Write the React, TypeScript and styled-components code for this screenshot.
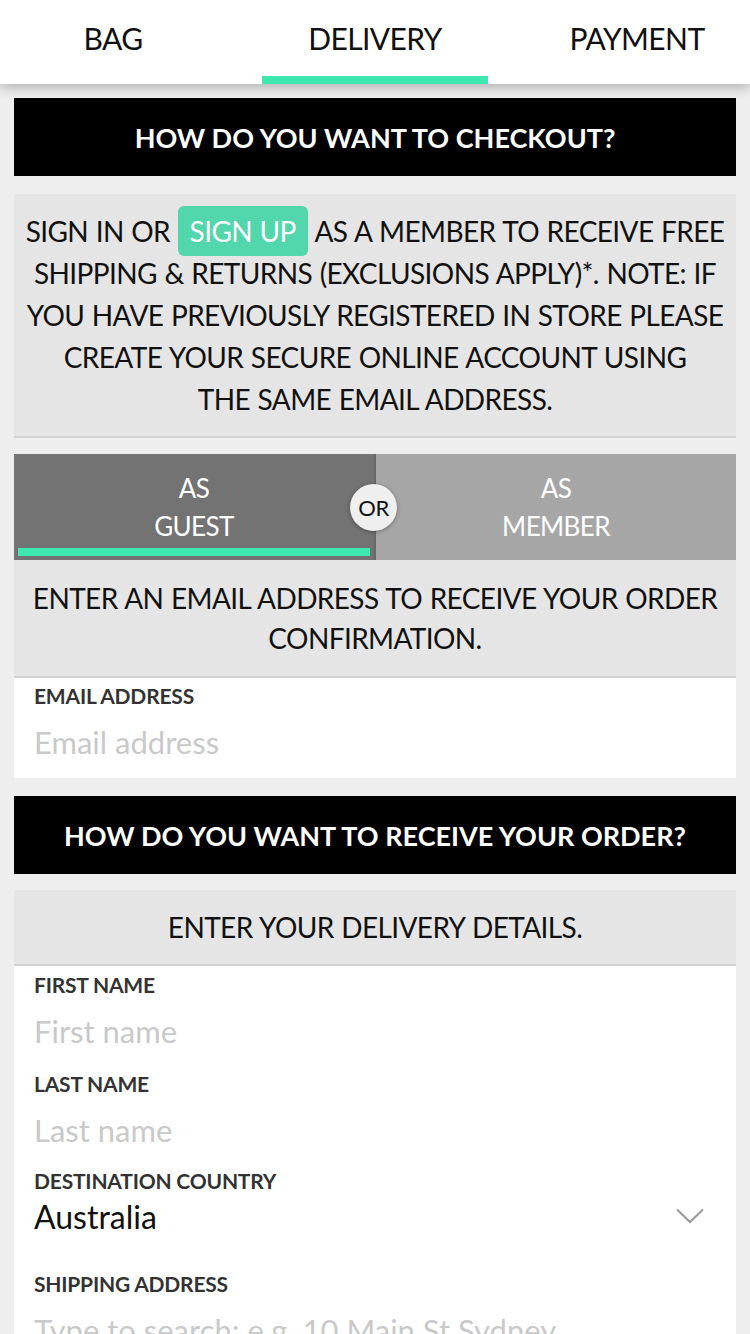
import React from "react";
import styled, { createGlobalStyle } from "styled-components";

const FONT = `Futura, "Century Gothic", Lato, "Noto Sans", sans-serif`;
const GREEN = "#3de8b0";

const GlobalStyle = createGlobalStyle`
  * { box-sizing: border-box; }
  html, body { margin: 0; padding: 0; }
  body {
    background: #eeeeee;
    font-family: ${FONT};
    color: #111;
    -webkit-font-smoothing: antialiased;
  }
`;

const Header = styled.header`
  height: 84px;
  background: #fff;
  display: flex;
  justify-content: space-between;
  box-shadow: 0 3px 12px rgba(0, 0, 0, 0.28);
  position: relative;
  z-index: 2;
`;

const Tab = styled.div<{ $active?: boolean }>`
  width: 226px;
  height: 84px;
  display: flex;
  align-items: center;
  justify-content: center;
  font-size: 30px;
  letter-spacing: -0.6px;
  color: #111;
  border-bottom: 8px solid ${(p) => (p.$active ? GREEN : "transparent")};
`;

const Main = styled.main`
  padding: 14px 14px 0;
  display: flex;
  flex-direction: column;
`;

const Banner = styled.div<{ $gap?: number }>`
  height: 78px;
  background: #000;
  color: #fff;
  font-weight: 700;
  font-size: 27px;
  display: flex;
  align-items: center;
  justify-content: center;
  margin-top: ${(p) => p.$gap ?? 0}px;
`;

const InfoBox = styled.div<{ $gap?: number; $pad: number; $lh: number }>`
  background: #e5e5e5;
  border-bottom: 2px solid #d2d2d2;
  text-align: center;
  font-size: 28px;
  letter-spacing: -0.6px;
  word-spacing: 1px;
  line-height: ${(p) => p.$lh}px;
  padding: ${(p) => p.$pad}px 2px;
  margin-top: ${(p) => p.$gap ?? 0}px;
`;

const SignUp = styled.span`
  background: #52d6ab;
  color: #fff;
  border-radius: 6px;
  padding: 8px 12px;
`;

const Toggle = styled.div`
  margin-top: 16px;
  height: 106px;
  display: flex;
  position: relative;
`;

const ToggleSide = styled.div<{ $active?: boolean }>`
  flex: 1;
  position: relative;
  background: ${(p) => (p.$active ? "#737373" : "#a6a6a6")};
  border-right: ${(p) => (p.$active ? "2px solid #686868" : "none")};
  color: #fff;
  text-align: center;
  font-size: 26px;
  letter-spacing: -0.6px;
  line-height: 38px;
  padding-top: 15px;
`;

const ActiveBar = styled.div`
  position: absolute;
  left: 4px;
  right: 4px;
  bottom: 4px;
  height: 8px;
  background: ${GREEN};
`;

const OrBadge = styled.div`
  position: absolute;
  left: calc(50% - 25px);
  top: 30px;
  width: 47px;
  height: 47px;
  border-radius: 50%;
  background: #efefef;
  box-shadow: 0 1px 4px rgba(0, 0, 0, 0.35);
  color: #111;
  font-size: 22px;
  letter-spacing: -0.5px;
  display: flex;
  align-items: center;
  justify-content: center;
  z-index: 1;
`;

const FieldPanel = styled.div<{ $top: number; $bottom: number }>`
  background: #fff;
  padding: ${(p) => p.$top}px 20px ${(p) => p.$bottom}px;
  display: flex;
  flex-direction: column;
`;

const Field = styled.label<{ $after?: number }>`
  display: flex;
  flex-direction: column;
  margin-bottom: ${(p) => p.$after ?? 0}px;
`;

const Label = styled.span`
  font-size: 21px;
  font-weight: 700;
  line-height: 24px;
  color: #333;
  text-transform: uppercase;
  letter-spacing: -0.2px;
`;

const Input = styled.input`
  border: none;
  outline: none;
  padding: 0;
  margin: 12px 0 0;
  height: 44px;
  background: transparent;
  font-family: ${FONT};
  font-size: 31px;
  color: #111;
  &::placeholder {
    color: #c9c9c9;
  }
`;

const SelectRow = styled.div`
  height: 46px;
  display: flex;
  align-items: center;
  justify-content: space-between;
  font-size: 32px;
  color: #111;
  padding-right: 12px;
`;

const Chevron = () => (
  <svg width="28" height="16" viewBox="0 0 28 16" aria-hidden="true">
    <polyline points="1,1.5 14,14 27,1.5" fill="none" stroke="#999" strokeWidth="2" />
  </svg>
);

export default function App() {
  return (
    <>
      <GlobalStyle />
      <Header>
        <Tab>BAG</Tab>
        <Tab $active>DELIVERY</Tab>
        <Tab>PAYMENT</Tab>
      </Header>
      <Main>
        <Banner>HOW DO YOU WANT TO CHECKOUT?</Banner>
        <InfoBox $gap={18} $pad={16} $lh={42}>
          SIGN IN OR <SignUp>SIGN UP</SignUp> AS A MEMBER TO RECEIVE FREE
          <br />
          SHIPPING &amp; RETURNS (EXCLUSIONS APPLY)*. NOTE: IF
          <br />
          YOU HAVE PREVIOUSLY REGISTERED IN STORE PLEASE
          <br />
          CREATE YOUR SECURE ONLINE ACCOUNT USING
          <br />
          THE SAME EMAIL ADDRESS.
        </InfoBox>
        <Toggle>
          <ToggleSide $active>
            AS
            <br />
            GUEST
            <ActiveBar />
          </ToggleSide>
          <OrBadge>OR</OrBadge>
          <ToggleSide>
            AS
            <br />
            MEMBER
          </ToggleSide>
        </Toggle>
        <InfoBox $pad={18} $lh={40}>
          ENTER AN EMAIL ADDRESS TO RECEIVE YOUR ORDER
          <br />
          CONFIRMATION.
        </InfoBox>
        <FieldPanel $top={6} $bottom={14}>
          <Field>
            <Label>Email address</Label>
            <Input placeholder="Email address" />
          </Field>
        </FieldPanel>
        <Banner $gap={18}>HOW DO YOU WANT TO RECEIVE YOUR ORDER?</Banner>
        <InfoBox $gap={16} $pad={17} $lh={40}>
          ENTER YOUR DELIVERY DETAILS.
        </InfoBox>
        <FieldPanel $top={7} $bottom={40}>
          <Field $after={19}>
            <Label>First name</Label>
            <Input placeholder="First name" />
          </Field>
          <Field $after={17}>
            <Label>Last name</Label>
            <Input placeholder="Last name" />
          </Field>
          <Field $after={33}>
            <Label>Destination country</Label>
            <SelectRow>
              <span>Australia</span>
              <Chevron />
            </SelectRow>
          </Field>
          <Field>
            <Label>Shipping address</Label>
            <Input placeholder="Type to search: e.g. 10 Main St Sydney" />
          </Field>
        </FieldPanel>
      </Main>
    </>
  );
}
